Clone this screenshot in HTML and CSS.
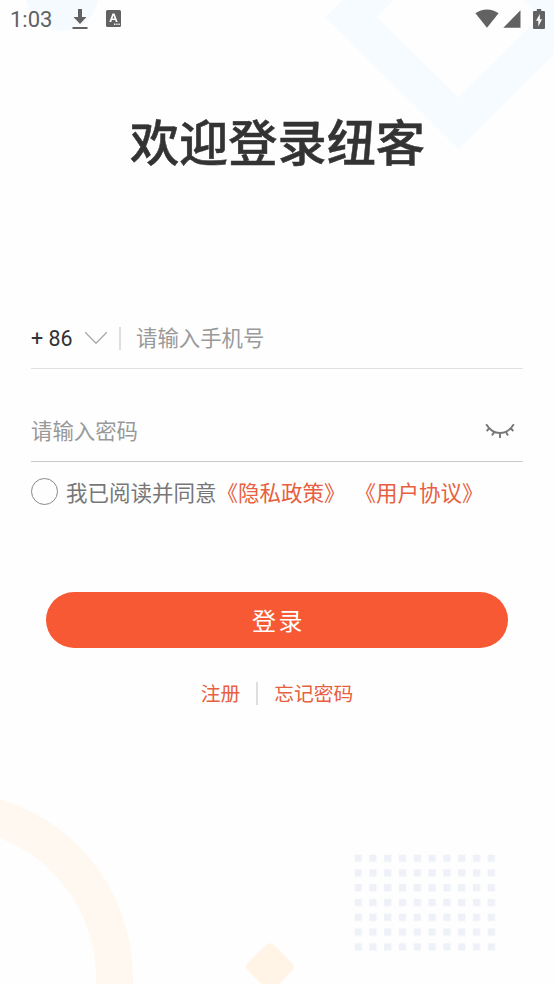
FILE: index.html
```html
<!DOCTYPE html>
<html lang="zh-CN">
<head>
<meta charset="utf-8">
<title>登录</title>
<link rel="stylesheet" href="styles.css">
</head>
<body>
<div class="screen">
  <svg class="backdrop" viewBox="0 0 554 984" aria-hidden="true">
    <defs>
      <pattern id="dots" x="354.5" y="854.5" width="14.8" height="14.8" patternUnits="userSpaceOnUse">
        <rect width="7.3" height="7.3" fill="#eff1f8"/>
      </pattern>
    </defs>
    <circle cx="62" cy="-5" r="36" fill="#f5faff"/>
    <path d="M325.500 17L458.500 149L592 17L458.500 -116Z M377 17L458.500 -65L540 17L458.500 97.500Z" fill="#f5fbff" fill-rule="evenodd"/>
    <circle cx="-54" cy="978" r="168.500" fill="none" stroke="#fff8f0" stroke-width="37"/>
    <path d="M266 945Q270 941.500 274 945L292 963Q296 967 292 971L274 989H266L248 971Q244 967 248 963Z" fill="#fff4e6"/>
    <rect x="354.500" y="854.500" width="141.500" height="97" fill="url(#dots)"/>
  </svg>

  <header class="status">
    <span class="clock">1:03</span>
    <svg class="download" viewBox="0 0 16 22"><path d="M6 1h4v8h4.500L8 16 1.500 9H6zM.5 19h15v2H.5z"/></svg>
    <svg class="badge" viewBox="0 0 15 17"><path fill-rule="evenodd" d="M1.500 0h12Q15 0 15 1.500v14q0 1.500-1.500 1.500h-12Q0 17 0 15.500v-14Q0 0 1.500 0zM6.500 3.500L3.300 12h1.900l.7-1.900h3.200l.7 1.900h1.900L8.500 3.500zM7.500 5.500l1 3h-2zM8 13.500V15h1.300v-1.500zm2.300 0V15h1.300v-1.500zm2.200 0V15h1.300v-1.500z"/></svg>
    <svg class="wifi" viewBox="0 0 24 19"><path d="M.4 4.200Q5.500.4 12 .4t11.600 3.800L12 18.700z"/></svg>
    <svg class="signal" viewBox="0 0 18 18"><path d="M17.500.3v17.400H.3z"/></svg>
    <svg class="battery" viewBox="0 0 12 20"><path fill-rule="evenodd" d="M3.800 0h4.400v2H11q1 0 1 1v16q0 1-1 1H1q-1 0-1-1V3q0-1 1-1h2.800zM6.900 5L3 11.800h2.300V17.500L9 10.200H6.900z"/></svg>
  </header>

  <main class="login">
    <h1 class="title">欢迎登录纽客</h1>
    <div class="field phone">
      <span class="code">+ 86</span>
      <svg class="chevron" viewBox="0 0 24 14"><path d="M1.200 1.200L12 12.300 22.800 1.200"/></svg>
      <i class="divider"></i>
      <span class="hint">请输入手机号</span>
    </div>
    <div class="field password">
      <span class="hint">请输入密码</span>
      <svg class="eye" viewBox="0 0 30 16"><path d="M1.200 1.200Q6.500 10 15 10T28.800 1.200M4.500 5L1.700 8M9.200 8.800L7 12.500M15 10v5M20.800 8.800L23 12.500M25.500 5l2.800 3"/></svg>
    </div>
    <div class="agreement">
      <span class="radio"></span>
      <span>我已阅读并同意</span><a class="policy">《隐私政策》</a><a class="terms">《用户协议》</a>
    </div>
    <button class="submit" type="button">登录</button>
    <nav class="links">
      <a>注册</a><i class="divider"></i><a>忘记密码</a>
    </nav>
  </main>
</div>
</body>
</html>
```
FILE: styles.css
```css
* { box-sizing: border-box; }
body {
  margin: 0;
  font-family: Roboto, "Noto Sans CJK SC", sans-serif;
  background: #fefefe;
}
.screen {
  position: relative;
  height: 984px;
  overflow: hidden;
}
.backdrop {
  position: absolute;
  inset: 0;
  width: 554px;
  height: 984px;
}
.status {
  position: relative;
  display: flex;
  align-items: center;
  height: 38px;
  padding: 0 9px 0 10px;
  color: #616161;
}
.status svg { fill: #626262; }
.clock {
  width: 62px;
  padding-top: 1px;
  font-size: 22px;
  line-height: 38px;
}
.download { width: 16px; height: 22px; margin-top: -1px; }
.badge { width: 15px; height: 17px; margin: -1px 0 0 18px; }
.wifi { width: 24px; height: 19px; margin: -1px 0 0 auto; }
.signal { width: 18px; height: 18px; margin: -1px 0 0 4px; }
.battery { width: 12px; height: 20px; margin: -1px 0 0 12px; }
.login {
  position: relative;
  padding: 0 31px;
}
.title {
  margin: 68px -1px 0 0;
  font-size: 49.200px;
  font-weight: 500;
  line-height: 76px;
  text-align: center;
  color: #333;
  -webkit-text-stroke: .5px #333;
}
.field {
  display: flex;
  align-items: center;
  font-size: 21.400px;
  line-height: 32px;
}
.phone {
  height: 61px;
  margin-top: 126px;
  border-bottom: 1px solid #e0e0e0;
}
.password {
  height: 61px;
  margin-top: 32px;
  border-bottom: 1px solid #c9c9c9;
}
.code { width: 53px; padding-top: 2px; color: #333; }
.chevron { width: 24px; height: 14px; }
.chevron path { fill: none; stroke: #aaa; stroke-width: 1.300; }
.divider {
  width: 2px;
  height: 23px;
  background: #dedede;
}
.phone .divider { margin: 0 15px 0 11px; }
.hint { padding-top: 2px; color: #999; }
.eye { width: 30px; height: 16px; margin: 0 8px 0 auto; }
.eye path { fill: none; stroke: #777; stroke-width: 1.900; }
.agreement {
  display: flex;
  align-items: center;
  height: 58px;
  font-size: 21.500px;
  color: #777;
}
.radio {
  width: 27px;
  height: 27px;
  margin-right: 8px;
  border: 1.500px solid #8c8686;
  border-radius: 50%;
}
.agreement a, .links a { color: #e75f40; }
.terms { margin-left: 9px; }
.submit {
  display: block;
  width: 462px;
  height: 56px;
  margin: 72px auto 0;
  padding: 0 0 2px 3px;
  border: 0;
  border-radius: 28px;
  background: #f75934;
  color: #fff;
  font: inherit;
  font-size: 24px;
  letter-spacing: 2.500px;
}
.links {
  display: flex;
  align-items: center;
  justify-content: center;
  gap: 16px;
  margin-top: 29px;
  font-size: 19.800px;
  line-height: 30px;
}
.links a { padding-top: 3px; }
```
